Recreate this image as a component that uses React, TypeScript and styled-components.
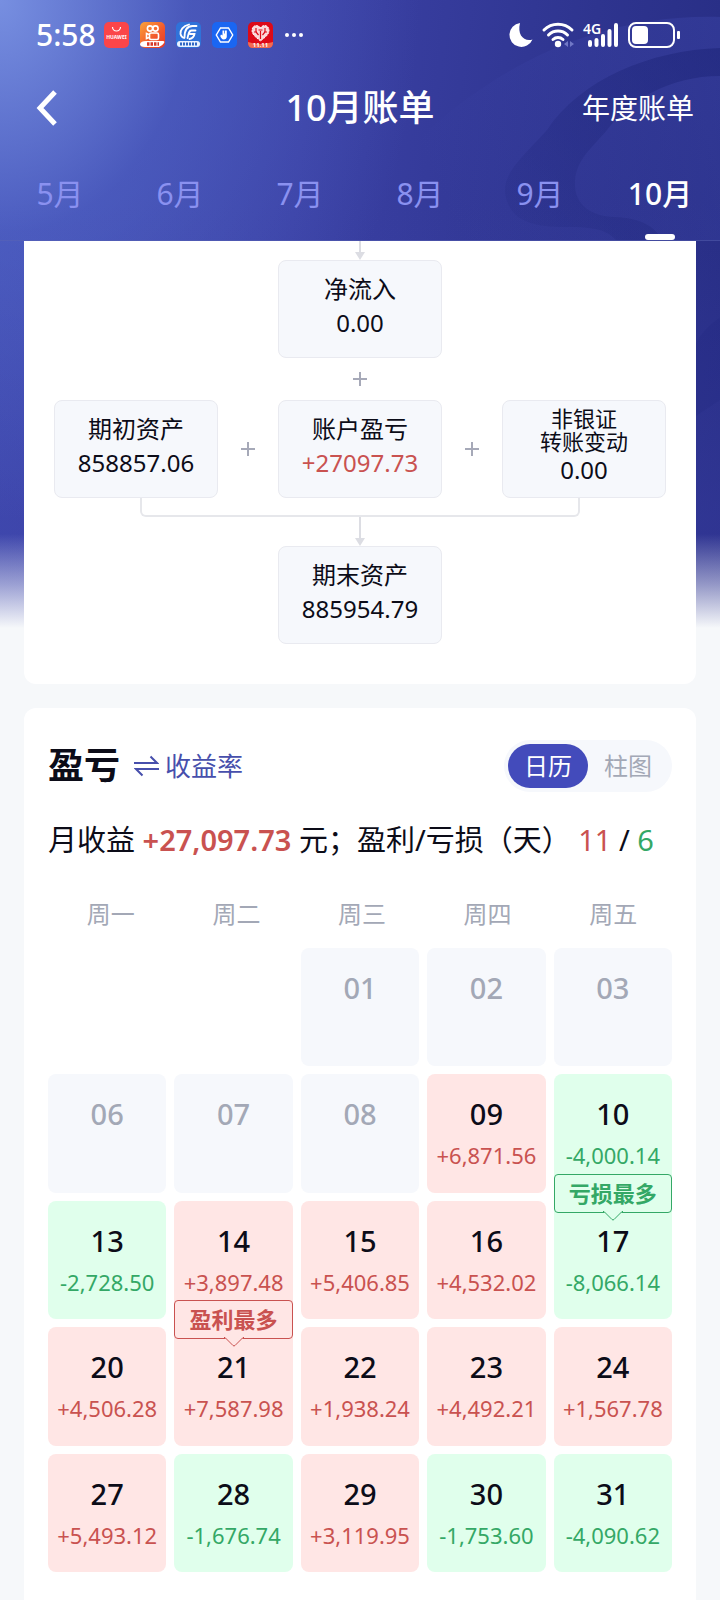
import React, { useState } from "react";
import styled, { createGlobalStyle } from "styled-components";

const color = {
  ink: "#0c0c18",
  muted: "#a3a8b6",
  brand: "#434bbb",
  link: "#474fac",
  gain: "#c95250",
  gainFill: "#ffe6e5",
  loss: "#34a866",
  lossFill: "#e0ffec",
  tile: "#f6f8fc",
  page: "#f6f8fa",
  line: "#dcdde3",
};

const GlobalStyle = createGlobalStyle`
  *, *::before, *::after { box-sizing: border-box; }
  body {
    margin: 0;
    background: ${color.page};
    color: ${color.ink};
    font-family: "Noto Sans", "Noto Sans CJK SC", sans-serif;
  }
  button {
    font: inherit;
    color: inherit;
    background: none;
    border: 0;
    padding: 0;
    cursor: pointer;
  }
`;

const Page = styled.div`
  position: relative;
  isolation: isolate;
  overflow: hidden;
`;

const Backdrop = styled.div`
  position: absolute;
  z-index: -1;
  inset: 0 0 auto;
  height: 640px;
  background:
    linear-gradient(to bottom, rgba(246, 248, 250, 0) 534px, rgba(246, 248, 250, 0.5) 584px, ${color.page} 628px),
    radial-gradient(ellipse 420px 520px at 0 0, rgba(128, 154, 232, 0.85), rgba(88, 112, 208, 0.4) 45%, rgba(70, 84, 190, 0) 100%),
    linear-gradient(to bottom, rgba(58, 63, 165, 0) 200px, rgba(58, 63, 165, 0.45) 520px),
    linear-gradient(97deg, #4450b6 0%, #3b41a5 40%, #2e348f 75%, #262c82 100%);

  svg {
    display: block;
    margin-left: auto;
  }
`;

const StatusBar = styled.div`
  display: flex;
  align-items: center;
  justify-content: space-between;
  height: 68px;
  padding: 2px 40px 0 36px;
  color: #fff;
`;

const StatusGroup = styled.div<{ $gap: number }>`
  display: flex;
  align-items: center;
  gap: ${(p) => p.$gap}px;

  svg {
    display: block;
    overflow: visible;
  }
`;

const Clock = styled.span`
  font-size: 30px;
  line-height: 32px;
  font-weight: 500;
  margin-right: -3px;
`;

const TitleBar = styled.div`
  display: grid;
  grid-template-columns: 1fr auto 1fr;
  align-items: center;
  height: 80px;
  padding: 0 26px;
  color: #fff;
`;

const BackButton = styled.button`
  justify-self: start;
  padding: 0 12px 0 10px;

  svg {
    display: block;
  }
`;

const Title = styled.h1`
  margin: 0;
  font-size: 36px;
  line-height: 44px;
  font-weight: 500;
`;

const YearLink = styled.a`
  justify-self: end;
  color: #fff;
  font-size: 28px;
  line-height: 36px;
  text-decoration: none;
`;

const Months = styled.nav`
  display: grid;
  grid-template-columns: repeat(6, 1fr);
  height: 93px;
  border-bottom: 1px solid rgba(90, 100, 180, 0.5);
`;

const MonthTab = styled.button<{ $active: boolean }>`
  display: flex;
  flex-direction: column;
  align-items: center;
  justify-content: space-between;
  padding-top: 26px;
  font-size: 30px;
  line-height: 40px;
  font-weight: ${(p) => (p.$active ? 500 : 400)};
  color: ${(p) => (p.$active ? "#fff" : "#8a91f0")};

  &::after {
    content: "";
    width: 30px;
    height: 6px;
    border-radius: 3px;
    background: ${(p) => (p.$active ? "#fff" : "transparent")};
  }
`;

const Content = styled.main`
  display: grid;
  gap: 24px;
  padding: 0 24px;
`;

const FlowCard = styled.section`
  display: flex;
  flex-direction: column;
  align-items: center;
  padding: 0 30px 40px;
  background: #fff;
  border-radius: 0 0 12px 12px;

  svg {
    display: block;
  }
`;

const FlowRow = styled.div`
  display: grid;
  grid-template-columns: 164px 1fr 164px 1fr 164px;
  align-items: center;
  justify-items: center;
  width: 100%;
`;

const Node = styled.div`
  width: 164px;
  height: 98px;
  padding-top: 11px;
  border: 1px solid #e9eaf0;
  border-radius: 8px;
  background: ${color.tile};
  text-align: center;
`;

const TallNode = styled(Node)`
  padding-top: 6px;
`;

const NodeLabel = styled.div<{ $small?: boolean }>`
  font-size: ${(p) => (p.$small ? 22 : 24)}px;
  line-height: ${(p) => (p.$small ? 23 : 34)}px;
`;

const NodeValue = styled.div<{ $gain?: boolean }>`
  font-size: 24px;
  line-height: 34px;
  color: ${(p) => (p.$gain ? color.gain : color.ink)};
`;

const PlusSlot = styled.div`
  display: flex;
  align-items: center;
  justify-content: center;
  height: 42px;
`;

const Bracket = styled.div`
  align-self: stretch;
  height: 19px;
  margin: 0 86px;
  border: 2px solid #e6e7eb;
  border-top: 0;
  border-radius: 0 0 6px 6px;
`;

const ProfitCard = styled.section`
  padding: 26px 24px 40px;
  background: #fff;
  border-radius: 12px 12px 0 0;
`;

const ProfitHead = styled.div`
  display: flex;
  align-items: center;
  height: 64px;
`;

const ProfitTitle = styled.h2`
  margin: 0 14px 0 0;
  font-size: 36px;
  line-height: 44px;
  font-weight: 700;
`;

const SwapButton = styled.button`
  display: flex;
  align-items: center;
  gap: 6px;
  margin-right: auto;
  color: ${color.link};
  font-size: 26px;
  line-height: 36px;
`;

const Segmented = styled.div`
  display: flex;
  height: 52px;
  padding: 4px;
  border-radius: 26px;
  background: ${color.tile};
`;

const Segment = styled.button<{ $active: boolean }>`
  width: 80px;
  border-radius: 22px;
  font-size: 24px;
  line-height: 44px;
  color: ${(p) => (p.$active ? "#fff" : color.muted)};
  background: ${(p) => (p.$active ? color.brand : "transparent")};
`;

const Summary = styled.p`
  margin: 22px 0 36px;
  font-size: 29px;
  line-height: 40px;
  white-space: nowrap;
`;

const Tone = styled.span<{ $kind: "gain" | "loss"; $strong?: boolean }>`
  color: ${(p) => color[p.$kind]};
  font-weight: ${(p) => (p.$strong ? 600 : 400)};
`;

const Calendar = styled.table`
  display: block;

  thead,
  tbody {
    display: block;
  }
`;

const WeekHead = styled.tr`
  display: grid;
  grid-template-columns: repeat(5, 1fr);
  margin: 0 -4px 16px 0;
`;

const WeekDay = styled.th`
  padding: 0;
  font-size: 24px;
  line-height: 36px;
  font-weight: 400;
  color: ${color.muted};
`;

const Week = styled.tr`
  display: grid;
  grid-template-columns: repeat(5, 1fr);
  gap: 8px;

  & + & {
    margin-top: 8px;
  }
`;

type Kind = "gain" | "loss" | "idle" | "none";

const fills: Record<Kind, string> = {
  gain: color.gainFill,
  loss: color.lossFill,
  idle: color.tile,
  none: "transparent",
};

const Day = styled.td<{ $kind: Kind }>`
  position: relative;
  aspect-ratio: 1;
  padding: 22px 0 0;
  border-radius: 8px;
  text-align: center;
  background: ${(p) => fills[p.$kind]};
`;

const DayNumber = styled.div<{ $idle: boolean }>`
  font-size: 29px;
  line-height: 36px;
  font-weight: 500;
  color: ${(p) => (p.$idle ? color.muted : color.ink)};
`;

const Amount = styled.div<{ $kind: Kind }>`
  margin-top: 7px;
  font-size: 22px;
  line-height: 32px;
  color: ${(p) => (p.$kind === "gain" ? color.gain : color.loss)};
`;

const Flag = styled.div<{ $kind: Kind }>`
  position: absolute;
  top: -27px;
  left: 0;
  right: 0;
  height: 39px;
  border: 1px solid currentColor;
  border-radius: 4px;
  background: ${(p) => fills[p.$kind]};
  color: ${(p) => (p.$kind === "gain" ? color.gain : color.loss)};
  font-size: 22px;
  line-height: 36px;
  font-weight: 700;

  svg {
    position: absolute;
    top: 100%;
    left: calc(50% - 10px);
    margin-top: -1px;
  }
`;

const Plus = () => (
  <svg width="14" height="14" viewBox="0 0 14 14" stroke="#a6a9b8" strokeWidth="2">
    <path d="M7 0v14M0 7h14" />
  </svg>
);

const Arrow = ({ height }: { height: number }) => (
  <svg width="10" height={height} viewBox={`0 0 10 ${height}`}>
    <path d={`M5 0V${height - 6}`} stroke={color.line} strokeWidth="2" />
    <path d={`M0 ${height - 8}h10l-5 8z`} fill={color.line} />
  </svg>
);

const Swooshes = () => (
  <svg width="360" height="624" viewBox="360 0 360 624" fill="none">
    <defs>
      <linearGradient id="veil" x1="420" y1="150" x2="720" y2="20" gradientUnits="userSpaceOnUse">
        <stop offset="0" stopColor="#4a55c0" stopOpacity="0" />
        <stop offset="1" stopColor="#4a55c0" stopOpacity="0.25" />
      </linearGradient>
      <linearGradient id="band" x1="500" y1="240" x2="720" y2="50" gradientUnits="userSpaceOnUse">
        <stop offset="0" stopColor="#1d2478" stopOpacity="0.1" />
        <stop offset="1" stopColor="#1d2478" stopOpacity="0.55" />
      </linearGradient>
    </defs>
    <path d="M720 17C620 14 540 50 487 85C455 106 425 130 400 160V240H720Z" fill="url(#veil)" />
    <path
      d="M720 48C650 50 580 80 547 130C520 160 500 175 506 198C512 220 530 226 560 227C590 227 605 228 616 240H662C655 226 640 218 615 217C590 216 574 204 575 182C576 160 590 150 607 130C630 100 670 76 720 76Z"
      fill="url(#band)"
    />
    <path d="M720 318C700 330 690 350 690 372V420L720 400Z" fill="#1d2478" fillOpacity="0.15" />
  </svg>
);

const AppIcons = () => (
  <>
    <svg width="25" height="26" viewBox="0 0 25 26">
      <rect width="25" height="26" rx="5" fill="#fb4549" />
      <path d="M8.500 5a4 4 0 0 0 8 0" fill="none" stroke="#fff" strokeWidth="1.200" />
      <text x="12.500" y="16.500" fontSize="5" fontWeight="700" fill="#fff" textAnchor="middle">HUAWEI</text>
    </svg>
    <svg width="25" height="26" viewBox="0 0 25 26">
      <defs>
        <linearGradient id="kuai" x1="0" y1="0" x2="1" y2="1">
          <stop offset="0" stopColor="#fba43a" />
          <stop offset="0.6" stopColor="#f2562c" />
          <stop offset="1" stopColor="#e63a26" />
        </linearGradient>
      </defs>
      <rect width="25" height="26" rx="5" fill="url(#kuai)" />
      <g fill="none" stroke="#fff" strokeWidth="1.600">
        <circle cx="10" cy="6.500" r="2.600" />
        <circle cx="15.500" cy="6.500" r="2.600" />
        <rect x="9.500" y="11" width="9" height="6.500" rx="1.500" />
        <path d="M9 12.500l-2.500-1v5l2.500-1" />
      </g>
      <path d="M0 22q1-3 6-3h17q2 0 1 2t-5 4H5q-5 0-5-3z" fill="#fff" />
      <path d="M7 22h12" stroke="#d6382a" strokeWidth="3.500" strokeDasharray="2.500 1" />
    </svg>
    <svg width="25" height="26" viewBox="0 0 25 26">
      <rect width="25" height="26" rx="5" fill="#2f72d9" />
      <g fill="none" stroke="#fff" strokeWidth="1.800" strokeLinecap="round">
        <path d="M13 2.500C7 4 4 8 4.500 12c.500 2 1.500 3.500 3.500 4" />
        <path d="M20.500 4h-4c-5 0-8 4-8 11.500M19.500 8.500h-4c-2.500 0-3 3-4 7.500M14 12h4.500c-.500 3-2.500 4.500-5 5" />
      </g>
      <rect x="1" y="19" width="23" height="6" rx="3" fill="#e9f1ff" />
      <path d="M4 22h17" stroke="#2f66c4" strokeWidth="3" strokeDasharray="2 1" />
    </svg>
    <svg width="25" height="26" viewBox="0 0 25 26">
      <rect width="25" height="26" rx="5" fill="#1a66f2" />
      <path d="M8.500 6h8l4.200 7-4.200 7h-8l-4.200-7z" fill="none" stroke="#fff" strokeWidth="1.400" />
      <path d="M9 12.500l1.500 1V8.500h1.800v3h.700v-3h1.800v6c0 2-1.300 3-3 3-2 0-3-2-3.500-3.500z" fill="#fff" />
    </svg>
    <svg width="25" height="26" viewBox="0 0 25 26">
      <rect width="25" height="26" rx="5" fill="#dd0a18" />
      <path
        d="M12.500 6C10 2 4 3 4 8.500c0 4.500 5 7.500 8.500 10.500 3.500-3 8.500-6 8.500-10.500C21 3 15 2 12.500 6z"
        fill="#fbd9d9"
        stroke="#fff"
        strokeDasharray="2 1"
      />
      <path d="M8 6v4l2.500 3M17 6v4L14.500 13M12.500 9v8M6 10h3M16 10h3M10.500 8h4" stroke="#dd0a18" fill="none" strokeWidth="1.200" />
      <path d="M0 20q12.500 4 25 0v1q0 5-5 5H5q-5 0-5-5z" fill="#f26a52" />
      <text x="12.500" y="25" fontSize="6" fontWeight="700" fill="#fff" textAnchor="middle">11.11</text>
    </svg>
  </>
);

const StatusIcons = () => (
  <>
    <svg width="24" height="24" viewBox="0 0 24 24">
      <path d="M11 0A12 12 0 1 0 23.500 16.500C15 19 8 12 11 0z" fill="#fff" />
    </svg>
    <svg width="32" height="26" viewBox="0 0 32 26" fill="none" stroke="#fff" strokeWidth="3" strokeLinecap="round">
      <path d="M2 8a20 20 0 0 1 28 0M6.500 13a13.500 13.500 0 0 1 19 0M11 17.500a7.500 7.500 0 0 1 10 0" />
      <circle cx="16" cy="22" r="3.200" fill="#fff" stroke="none" />
      <path d="M26 19v6l-4-3zM28 19v6l4-3z" fill="#7178c6" stroke="none" />
    </svg>
    <svg width="36" height="26" viewBox="0 0 36 26">
      <text x="0" y="12" fontSize="14" fontWeight="600" fill="#fff">4G</text>
      <path d="M7 20v3M13.500 18v5M20 14v9M26.500 9v14M33 3v20" stroke="#fff" strokeWidth="4" strokeLinecap="round" />
    </svg>
    <svg width="52" height="26" viewBox="0 0 52 26">
      <rect x="1" y="1" width="45" height="24" rx="7" fill="none" stroke="#fff" strokeWidth="2" />
      <rect x="4" y="4" width="16" height="18" rx="4" fill="#fff" />
      <rect x="49" y="9" width="3" height="8" rx="1" fill="#fff" />
    </svg>
  </>
);

const months = ["5月", "6月", "7月", "8月", "9月", "10月"];

type DayData = { day?: string; amount?: string; flag?: string };

const weeks: DayData[][] = [
  [{}, {}, { day: "01" }, { day: "02" }, { day: "03" }],
  [{ day: "06" }, { day: "07" }, { day: "08" }, { day: "09", amount: "+6,871.56" }, { day: "10", amount: "-4,000.14" }],
  [
    { day: "13", amount: "-2,728.50" },
    { day: "14", amount: "+3,897.48" },
    { day: "15", amount: "+5,406.85" },
    { day: "16", amount: "+4,532.02" },
    { day: "17", amount: "-8,066.14", flag: "亏损最多" },
  ],
  [
    { day: "20", amount: "+4,506.28" },
    { day: "21", amount: "+7,587.98", flag: "盈利最多" },
    { day: "22", amount: "+1,938.24" },
    { day: "23", amount: "+4,492.21" },
    { day: "24", amount: "+1,567.78" },
  ],
  [
    { day: "27", amount: "+5,493.12" },
    { day: "28", amount: "-1,676.74" },
    { day: "29", amount: "+3,119.95" },
    { day: "30", amount: "-1,753.60" },
    { day: "31", amount: "-4,090.62" },
  ],
];

const kindOf = ({ day, amount }: DayData): Kind => {
  if (!day) return "none";
  if (!amount) return "idle";
  return amount.startsWith("+") ? "gain" : "loss";
};

const DayCell = ({ data }: { data: DayData }) => {
  const kind = kindOf(data);
  return (
    <Day $kind={kind}>
      {data.day && <DayNumber $idle={kind === "idle"}>{data.day}</DayNumber>}
      {data.amount && <Amount $kind={kind}>{data.amount}</Amount>}
      {data.flag && (
        <Flag $kind={kind}>
          {data.flag}
          <svg width="20" height="10" viewBox="0 0 20 10">
            <path d="M0 0L9 9h2L20 0z" fill={fills[kind]} />
            <path d="M0 .500h1L9 8.500q1 1 2 0L19 .500h1" fill="none" stroke="currentColor" />
          </svg>
        </Flag>
      )}
    </Day>
  );
};

export default function App() {
  const [month, setMonth] = useState("10月");
  const [view, setView] = useState("日历");

  return (
    <Page>
      <GlobalStyle />
      <Backdrop>
        <Swooshes />
      </Backdrop>
      <header>
        <StatusBar>
          <StatusGroup $gap={11}>
            <Clock>5:58</Clock>
            <AppIcons />
            <svg width="20" height="6" viewBox="0 0 20 6" fill="#fff">
              <circle cx="3" cy="3" r="2" />
              <circle cx="10" cy="3" r="2" />
              <circle cx="17" cy="3" r="2" />
            </svg>
          </StatusGroup>
          <StatusGroup $gap={9}>
            <StatusIcons />
          </StatusGroup>
        </StatusBar>
        <TitleBar>
          <BackButton aria-label="返回">
            <svg width="22" height="36" viewBox="0 0 22 36" fill="none" stroke="#fff" strokeWidth="5">
              <path d="M19 2L4 18l15 16" />
            </svg>
          </BackButton>
          <Title>10月账单</Title>
          <YearLink href="#year">年度账单</YearLink>
        </TitleBar>
        <Months>
          {months.map((m) => (
            <MonthTab key={m} $active={m === month} onClick={() => setMonth(m)}>
              {m}
            </MonthTab>
          ))}
        </Months>
      </header>
      <Content>
        <FlowCard>
          <Arrow height={19} />
          <Node>
            <NodeLabel>净流入</NodeLabel>
            <NodeValue>0.00</NodeValue>
          </Node>
          <PlusSlot>
            <Plus />
          </PlusSlot>
          <FlowRow>
            <Node>
              <NodeLabel>期初资产</NodeLabel>
              <NodeValue>858857.06</NodeValue>
            </Node>
            <Plus />
            <Node>
              <NodeLabel>账户盈亏</NodeLabel>
              <NodeValue $gain>+27097.73</NodeValue>
            </Node>
            <Plus />
            <TallNode>
              <NodeLabel $small>
                非银证
                <br />
                转账变动
              </NodeLabel>
              <NodeValue>0.00</NodeValue>
            </TallNode>
          </FlowRow>
          <Bracket />
          <Arrow height={29} />
          <Node>
            <NodeLabel>期末资产</NodeLabel>
            <NodeValue>885954.79</NodeValue>
          </Node>
        </FlowCard>
        <ProfitCard>
          <ProfitHead>
            <ProfitTitle>盈亏</ProfitTitle>
            <SwapButton>
              <svg width="25" height="22" viewBox="0 0 25 22" fill="none" stroke="currentColor" strokeWidth="2">
                <path d="M0 8h23L16.500 1.500M25 14H2l6.500 6.500" />
              </svg>
              收益率
            </SwapButton>
            <Segmented>
              {["日历", "柱图"].map((v) => (
                <Segment key={v} $active={v === view} onClick={() => setView(v)}>
                  {v}
                </Segment>
              ))}
            </Segmented>
          </ProfitHead>
          <Summary>
            月收益{" "}
            <Tone $kind="gain" $strong>
              +27,097.73
            </Tone>{" "}
            元；盈利/亏损（天） <Tone $kind="gain">11</Tone> / <Tone $kind="loss">6</Tone>
          </Summary>
          <Calendar>
            <thead>
              <WeekHead>
                {["周一", "周二", "周三", "周四", "周五"].map((d) => (
                  <WeekDay key={d} scope="col">
                    {d}
                  </WeekDay>
                ))}
              </WeekHead>
            </thead>
            <tbody>
              {weeks.map((week, i) => (
                <Week key={i}>
                  {week.map((data, j) => (
                    <DayCell key={j} data={data} />
                  ))}
                </Week>
              ))}
            </tbody>
          </Calendar>
        </ProfitCard>
      </Content>
    </Page>
  );
}
